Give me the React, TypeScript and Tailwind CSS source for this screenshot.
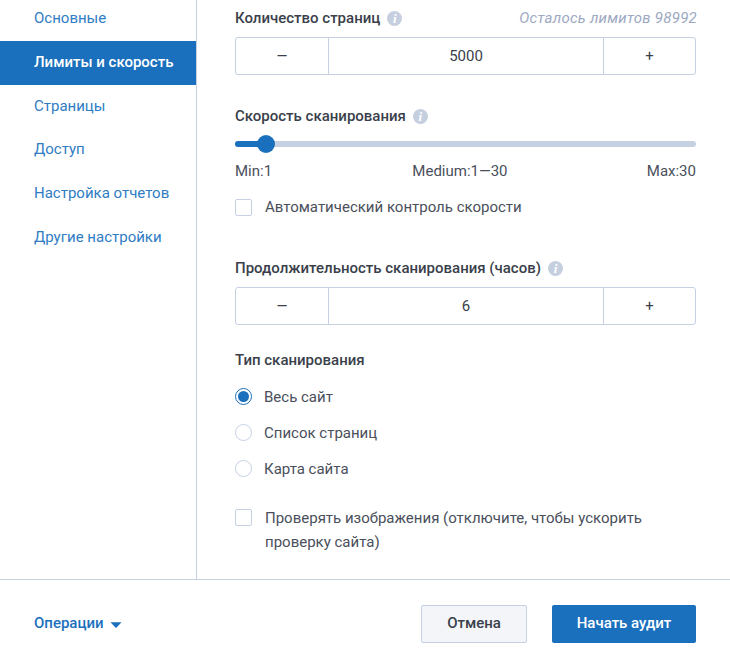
const menu = [
  "Основные",
  "Лимиты и скорость",
  "Страницы",
  "Доступ",
  "Настройка отчетов",
  "Другие настройки",
];

function Info() {
  return (
    <span className="ml-[7px] flex h-[15px] w-[15px] items-center justify-center rounded-full bg-[#c5cfe0] font-['Liberation_Serif',serif] text-[13px] font-bold italic leading-none text-white">
      i
    </span>
  );
}

function Stepper({ value }: { value: string }) {
  return (
    <div className="flex h-[38px] w-[461px] rounded-[3px] border border-[#c5d0e3] text-[15px] text-[#3a3f4b]">
      <div className="flex w-[93px] items-center justify-center border-r border-[#c5d0e3] text-[14px]">—</div>
      <div className="flex flex-1 items-center justify-center">{value}</div>
      <div className="flex w-[92px] items-center justify-center border-l border-[#c5d0e3]">+</div>
    </div>
  );
}

function Radio({ label, checked }: { label: string; checked?: boolean }) {
  return (
    <div className="flex h-9 items-center">
      <span
        className={
          checked
            ? "flex h-[17px] w-[17px] items-center justify-center rounded-full border border-[#1b70bd]"
            : "flex h-[17px] w-[17px] items-center justify-center rounded-full border border-[#c5d0e3]"
        }
      >
        {checked && <span className="h-[11px] w-[11px] rounded-full bg-[#1b70bd]" />}
      </span>
      <span className="ml-3 pt-[2px] text-[15px] text-[#4a4f5b]">{label}</span>
    </div>
  );
}

export default function App() {
  return (
    <div className="flex h-[664px] w-[730px] flex-col overflow-hidden bg-white font-['Roboto',sans-serif]">
      <div className="flex h-[579px]">
        <div className="w-[197px] shrink-0 border-r border-[#c5d0e3]">
          <div className="-mt-[3px]">
            {menu.map((item, i) => (
              <div
                key={item}
                className={
                  i === 1
                    ? "flex h-[44px] items-center bg-[#1b70bd] pb-[2px] pl-[34px] text-[15px] font-medium text-white"
                    : "flex h-[43.8px] items-center pb-[1.6px] pl-[34px] text-[15px] text-[#2f7cc4]"
                }
              >
                {item}
              </div>
            ))}
          </div>
        </div>

        <div className="flex-1 pl-[38px]">
          <div className="flex h-[37px] w-[461px] items-center justify-between pb-[1px]">
            <div className="flex items-center text-[15px] font-medium text-[#3a3f4b]">
              Количество страниц
              <Info />
            </div>
            <span className="mr-[-1px] text-[15px] italic tracking-[0.25px] text-[#9da8c2]">Осталось лимитов 98992</span>
          </div>
          <Stepper value="5000" />

          <div className="mt-[31px] flex h-5 items-center text-[15px] font-medium text-[#3a3f4b]">
            Скорость сканирования
            <Info />
          </div>

          <div className="relative mt-[15px] h-[6px] w-[461px] rounded-full bg-[#c5d0e3]">
            <div className="h-[6px] w-[31px] rounded-full bg-[#1b70bd]" />
            <span className="absolute left-[22px] top-[-6px] h-[18px] w-[18px] rounded-full bg-[#1b70bd]" />
          </div>

          <div className="mt-[14px] flex h-5 w-[461px] items-center justify-between text-[15px] text-[#4a4f5b]">
            <span>Min:1</span>
            <span className="ml-[1px]">Medium:1—30</span>
            <span>Max:30</span>
          </div>

          <div className="mt-[16px] flex h-5 items-center">
            <span className="h-[17px] w-[17px] rounded-[2px] border border-[#c5d0e3]" />
            <span className="ml-[13px] text-[15px] text-[#4a4f5b]">Автоматический контроль скорости</span>
          </div>

          <div className="mt-[41px] flex h-5 items-center text-[15px] font-medium text-[#3a3f4b]">
            Продолжительность сканирования (часов)
            <Info />
          </div>
          <div className="mt-[9px]">
            <Stepper value="6" />
          </div>

          <div className="mt-[25px] flex h-5 items-center text-[15px] font-medium text-[#3a3f4b]">
            Тип сканирования
          </div>

          <div className="mt-[8px]">
            <Radio label="Весь сайт" checked />
            <Radio label="Список страниц" />
            <Radio label="Карта сайта" />
          </div>

          <div className="mt-[20px] flex w-[461px] items-start">
            <span className="mt-[3px] h-[17px] w-[17px] shrink-0 rounded-[2px] border border-[#c5d0e3]" />
            <span className="ml-[13px] text-[15px] leading-6 text-[#4a4f5b]">
              Проверять изображения (отключите, чтобы ускорить проверку сайта)
            </span>
          </div>
        </div>
      </div>

      <div className="flex h-[85px] items-start justify-between border-t border-[#c5d0e3] pl-[34px] pr-[34px] pt-[25px]">
        <div className="flex h-[38px] items-center pb-[2px] text-[15px] font-medium text-[#1b70bd]">
          Операции
          <svg width="12" height="6" viewBox="0 0 12 6" className="ml-[6px] mt-[4px]">
            <path d="M0.5 0.3 H11.5 L6.6 5.6 Q6 6 5.4 5.6 Z" fill="#1b70bd" />
          </svg>
        </div>
        <div className="flex">
          <div className="flex h-[38px] w-[106px] items-center justify-center rounded-[2px] border border-[#c5d0e3] bg-[#f3f5f9] pb-[2px] text-[15px] font-medium text-[#3a3f4b]">
            Отмена
          </div>
          <div className="ml-[25px] flex h-[38px] w-[144px] items-center justify-center rounded-[2px] bg-[#1b70bd] pb-[2px] text-[15px] font-medium text-white">
            Начать аудит
          </div>
        </div>
      </div>
    </div>
  );
}
